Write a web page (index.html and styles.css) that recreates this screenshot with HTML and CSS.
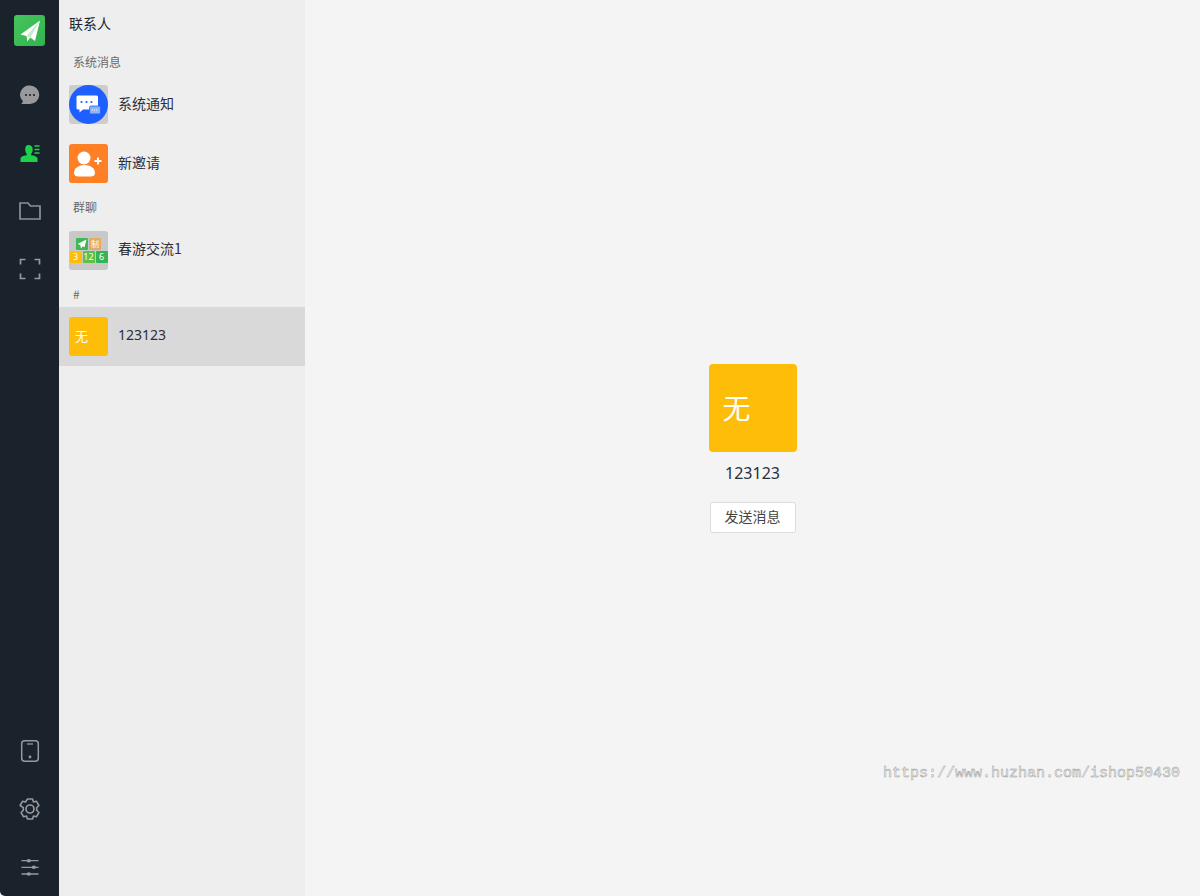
FILE: index.html
```html
<!DOCTYPE html>
<html lang="zh">
<head>
<meta charset="utf-8">
<title>联系人</title>
<link rel="stylesheet" href="styles.css">
</head>
<body>
<div class="app">
  <nav class="rail">
    <div class="rail-group">
      <div class="logo">
        <svg viewBox="0 0 31 31" width="31" height="31"><defs><linearGradient id="lg" x1="0" y1="0" x2="1" y2="1"><stop offset="0" stop-color="#46c45c"/><stop offset="1" stop-color="#34b24e"/></linearGradient></defs><rect width="31" height="31" rx="3" fill="url(#lg)"/><path d="M26 5.500 6.500 19.500l6 1.500 .8 5.500 3-4 4.700 3.500z" fill="#fff"/><path d="M26 5.500 12.500 21l3.800 1.500z" fill="#3cb854" opacity=".3"/></svg>
      </div>
      <div class="rail-item">
        <svg viewBox="0 0 22 22" width="22" height="22"><path d="M11 1.500a9.300 9.300 0 0 1 0 18.600H2.300l1.700-2.600A9.300 9.300 0 0 1 11 1.500z" fill="#98999c"/><circle cx="7" cy="11" r="1.100" fill="#1a222c"/><circle cx="11" cy="11" r="1.100" fill="#1a222c"/><circle cx="15" cy="11" r="1.100" fill="#1a222c"/></svg>
      </div>
      <div class="rail-item">
        <svg viewBox="0 0 22 22" width="22" height="22"><path d="M9.500 3c2.600 0 4.200 1.600 4.200 4.300 0 2-.7 3.600-1.500 4.500v1.500c2.500.4 6.300 1 6.300 3.400V20H1.500v-3.300c0-2.400 3.800-3 6.200-3.400v-1.500c-.8-.9-1.500-2.500-1.500-4.500C6.200 4.600 7 3 9.500 3z" fill="#1ed14b"/><path d="M15.500 4h5M15.500 7.500h5M15.500 11h5" stroke="#1ed14b" stroke-width="1.400" fill="none"/></svg>
      </div>
      <div class="rail-item">
        <svg viewBox="0 0 22 22" width="22" height="22"><path d="M1 3h8l2.500 3H21v13H1z" fill="none" stroke="#8f9093" stroke-width="1.700"/></svg>
      </div>
      <div class="rail-item">
        <svg viewBox="0 0 22 22" width="22" height="22"><path d="M1.500 6.500v-5h5M15.500 1.500h5v5M1.500 15.500v5h5M15.500 20.500h5v-5" fill="none" stroke="#98999c" stroke-width="1.700"/></svg>
      </div>
    </div>
    <div class="rail-group">
      <div class="rail-item">
        <svg viewBox="0 0 22 24" width="22" height="24"><rect x="2.700" y="1.700" width="16.600" height="20.600" rx="3" fill="none" stroke="#98999c" stroke-width="1.500"/><path d="M8 5h6" stroke="#98999c" stroke-width="1.300"/><circle cx="11" cy="18" r="1.400" fill="#98999c"/></svg>
      </div>
      <div class="rail-item">
        <svg viewBox="0 0 24 24" width="24" height="24"><path d="M9.500 2h5l1 3 2.900-.8 2.500 4.300-2.200 2.200v2.600l2.200 2.200-2.500 4.300-2.900-.8-1 3h-5l-1-3-2.900.8-2.500-4.300 2.200-2.200v-2.600L2.100 8.500l2.500-4.300 2.900.8z" fill="none" stroke="#98999c" stroke-width="1.600" stroke-linejoin="round"/><circle cx="12" cy="12" r="4" fill="none" stroke="#98999c" stroke-width="1.700"/></svg>
      </div>
      <div class="rail-item">
        <svg viewBox="0 0 22 22" width="22" height="22"><path d="M2.500 4.700h17M2.500 11.300h17M2.500 18h17" stroke="#98999c" stroke-width="1.300"/><ellipse cx="9.800" cy="4.700" rx="2.200" ry="1.800" fill="#98999c"/><ellipse cx="14.800" cy="11.300" rx="2.200" ry="1.800" fill="#98999c"/><ellipse cx="9.800" cy="18" rx="2.200" ry="1.800" fill="#98999c"/></svg>
      </div>
    </div>
  </nav>

  <aside class="contacts">
    <h1 class="contacts-title">联系人</h1>
    <div class="section">系统消息</div>
    <div class="row">
      <div class="avatar avatar-grey">
        <svg viewBox="0 0 39 39" width="39" height="39"><circle cx="19.500" cy="19.500" r="19.500" fill="#1d5fff"/><path d="M9 10.500h18.500a1.500 1.500 0 0 1 1.500 1.500v11a1.500 1.500 0 0 1-1.500 1.500H14l-3.500 3v-3H9A1.500 1.500 0 0 1 7.500 23V12A1.500 1.500 0 0 1 9 10.500z" fill="#fff"/><circle cx="12.500" cy="17" r="1.100" fill="#1d5fff"/><circle cx="17.500" cy="17" r="1.100" fill="#1d5fff"/><circle cx="22.500" cy="17" r="1.100" fill="#1d5fff"/><rect x="20.500" y="21" width="11" height="8" rx="1.500" fill="#8ab2f5" stroke="#1d5fff" stroke-width=".8"/><path d="M22.800 25h6.500" stroke="#fff" stroke-width="1" stroke-dasharray="1.200 1"/></svg>
      </div>
      <span class="row-name">系统通知</span>
    </div>
    <div class="row">
      <div class="avatar avatar-orange">
        <svg viewBox="0 0 39 39" width="39" height="39"><circle cx="15" cy="14" r="6.500" fill="#fff"/><path d="M5 29c0-5 5-8 10.500-8S26 24 26 29c0 2.500-2 3.500-4 3.500H9c-2 0-4-1-4-3.500z" fill="#fff"/><path d="M25.500 17h7M29 13.500v7" stroke="#fff" stroke-width="2"/></svg>
      </div>
      <span class="row-name">新邀请</span>
    </div>
    <div class="section">群聊</div>
    <div class="row">
      <div class="avatar avatar-group">
        <div class="tiles">
          <div class="tile-row">
            <span class="tile tile-green">
              <svg viewBox="0 0 10 10" width="10" height="10"><path d="M9.500.5.500 5l2.800.9.700 3.600 1.700-2.300 1.800 1z" fill="#fff"/></svg>
            </span>
            <span class="tile tile-tan">制</span>
          </div>
          <div class="tile-row">
            <span class="tile tile-yellow">3</span>
            <span class="tile tile-lime">12</span>
            <span class="tile tile-dark">6</span>
          </div>
        </div>
      </div>
      <span class="row-name">春游交流1</span>
    </div>
    <div class="section">#</div>
    <div class="row row-active">
      <div class="avatar avatar-yellow">无</div>
      <span class="row-name row-name-latin">123123</span>
    </div>
  </aside>

  <main class="detail">
    <div class="profile-avatar">无</div>
    <div class="profile-name">123123</div>
    <button class="send" type="button">发送消息</button>
    <div class="watermark">https://www.huzhan.com/ishop50430</div>
  </main>
</div>
</body>
</html>
```
FILE: styles.css
```css
* { box-sizing: border-box; }
html, body { height: 100%; }
body {
  margin: 0;
  background: #f4f4f4;
  font-family: "Noto Sans CJK SC", "Noto Sans", sans-serif;
  color: #2b2f3a;
}
.app { display: flex; height: 896px; overflow: hidden; }

.rail {
  width: 59px;
  flex: none;
  background: #1a222c;
  border-bottom-left-radius: 5px;
  display: flex;
  flex-direction: column;
  justify-content: space-between;
}
.rail-group { display: flex; flex-direction: column; }
.logo {
  height: 31px;
  margin: 15px 0 20px;
  display: flex;
  justify-content: center;
}
.rail-item {
  height: 58px;
  display: flex;
  align-items: center;
  justify-content: center;
}

.contacts {
  width: 246px;
  flex: none;
  background: #eeeeee;
  display: flex;
  flex-direction: column;
}
.contacts-title {
  margin: 0;
  height: 48px;
  padding-left: 10px;
  font-size: 14px;
  font-weight: 400;
  line-height: 47px;
  color: #22252e;
}
.section {
  height: 27.330px;
  padding-left: 14px;
  font-size: 12px;
  line-height: 28px;
  color: #6a6a6a;
}
.row {
  height: 59px;
  flex: none;
  padding-left: 10px;
  display: flex;
  align-items: center;
  gap: 10px;
}
.row-active { background: #d9d9d9; }
.row-name { font-size: 14px; line-height: 20px; padding-bottom: 4px; color: #2b2f3a; }
.row-name-latin { font-family: "Noto Sans", sans-serif; font-size: 14px; padding-bottom: 2px; }

.avatar {
  width: 39px;
  height: 39px;
  flex: none;
  border-radius: 3px;
  overflow: hidden;
}
.avatar-grey { background: #cdcdcd; }
.avatar-orange { background: #ff7f24; }
.avatar-yellow {
  background: #fdbd08;
  color: #fff;
  font-size: 13px;
  line-height: 37px;
  padding-left: 6px;
}
.avatar-group {
  background: #c8c8c8;
  display: flex;
  align-items: center;
  justify-content: center;
}
.tiles { display: flex; flex-direction: column; align-items: center; gap: 1px; }
.tile-row { display: flex; gap: 1px; }
.tile {
  width: 12px;
  height: 12px;
  border-radius: 1px;
  display: flex;
  align-items: center;
  justify-content: center;
  color: #fff;
  font-family: "Noto Sans", sans-serif;
  font-size: 9px;
  line-height: 1;
}
.tile-green { background: #3cb854; }
.tile-tan { background: #e2ab66; font-family: "Noto Sans CJK SC", sans-serif; font-size: 8px; }
.tile-yellow { background: #fdbd08; }
.tile-lime { background: #5cc04a; }
.tile-dark { background: #35b455; }

.detail {
  position: relative;
  flex: 1;
  display: flex;
  flex-direction: column;
  align-items: center;
  justify-content: center;
}
.profile-avatar {
  width: 88px;
  height: 88px;
  border-radius: 4px;
  background: #fdbd08;
  color: #fff;
  font-size: 28px;
  line-height: 86px;
  padding-left: 14px;
}
.profile-name {
  margin-top: 10px;
  font-family: "Noto Sans", sans-serif;
  font-size: 16px;
  line-height: 22px;
}
.send {
  margin-top: 18px;
  width: 86px;
  height: 31px;
  padding: 0 0 2px;
  background: #fff;
  border: 1px solid #dcdcdc;
  border-radius: 3px;
  font-family: inherit;
  font-size: 14px;
  line-height: 20px;
  color: #444;
}
.watermark {
  position: absolute;
  right: 20px;
  top: 764px;
  font-family: "Liberation Mono", monospace;
  font-size: 15px;
  line-height: 20px;
  color: #f6f6f6;
  -webkit-text-stroke: 0.5px #9c9c9c;
  white-space: nowrap;
}
```
